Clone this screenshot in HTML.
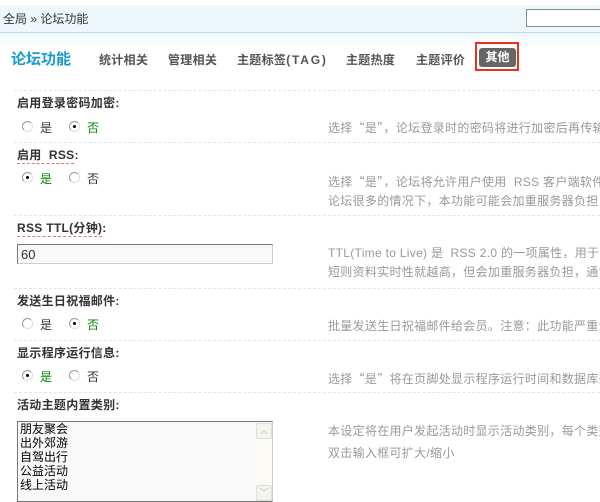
<!DOCTYPE html>
<html><head><meta charset="utf-8"><style>
body{margin:0;width:600px;height:502px;overflow:hidden;background:#fff;font-family:"Liberation Sans","Noto Sans CJK SC",sans-serif;font-size:12px;color:#333;position:relative}
.a{position:absolute;white-space:nowrap}
.q{font-family:"Noto Sans CJK SC",sans-serif}
.bar{position:absolute;left:0;top:5px;width:600px;height:27px;background:#eef7fb;border-bottom:1px solid #bcd9e6}
.fade{position:absolute;left:0;top:33px;width:600px;height:14px;background:linear-gradient(#eef7fb,#fff)}
.tab{font-weight:bold;color:#555;font-size:12px;top:51px;letter-spacing:0.3px}
.sep{position:absolute;left:14px;width:586px;border-top:1px dashed #d5e9f7;height:0}
.lbl{font-weight:bold;color:#333;font-size:12px;letter-spacing:0.3px}
.u{border-bottom:1px dashed #f07070;padding-bottom:1px}
.r{width:11px;height:11px;border-radius:50%;border:1px solid #999;border-right-color:#ddd;border-bottom-color:#ddd;background:#fff;position:absolute;box-sizing:border-box}
.r.on::after{content:"";position:absolute;left:3px;top:3px;width:3px;height:3px;background:#000;border-radius:50%}
.g{color:#080}
.d{color:#999;font-size:12px;line-height:19px;letter-spacing:0.3px}
</style></head><body>
<div class="bar"></div><div class="fade"></div>
<div class="a" style="left:3px;top:10px;color:#333">全局 » 论坛功能</div>
<div style="position:absolute;left:526px;top:9px;width:80px;height:16px;border:1px solid #888;border-right:none;background:#fff"></div>
<div class="a" style="left:11px;top:48px;font-size:15px;font-weight:bold;color:#1a9ad0">论坛功能</div>
<div class="a tab" style="left:99px">统计相关</div>
<div class="a tab" style="left:168px">管理相关</div>
<div class="a tab" style="left:237px">主题标签<span style="letter-spacing:1.8px">(TAG)</span></div>
<div class="a tab" style="left:346px">主题热度</div>
<div class="a tab" style="left:416px">主题评价</div>
<div style="position:absolute;left:475px;top:42px;width:44px;height:29px;border:2px solid #e8321c;box-sizing:border-box"></div>
<div class="a" style="left:479px;top:48px;width:37px;height:19px;background:#666;border-radius:3px;color:#fff;font-weight:bold;text-align:center;line-height:19px">其他</div>

<div class="sep" style="top:90px"></div>
<div class="a lbl" style="left:17px;top:94px">启用登录密码加密:</div>
<div class="r" style="left:22px;top:121px"></div><div class="a" style="left:40px;top:119px">是</div>
<div class="r on" style="left:69px;top:121px"></div><div class="a g" style="left:87px;top:119px">否</div>
<div class="a d" style="left:328px;top:118px">选择<span class="q">“</span>是<span class="q">”</span>，论坛登录时的密码将进行加密后再传输</div>

<div class="sep" style="top:142px"></div>
<div class="a lbl" style="left:17px;top:146px"><span class="u">启用&nbsp; RSS</span>:</div>
<div class="r on" style="left:22px;top:172px"></div><div class="a g" style="left:40px;top:170px">是</div>
<div class="r" style="left:69px;top:172px"></div><div class="a" style="left:87px;top:170px">否</div>
<div class="a d" style="left:328px;top:172px">选择<span class="q">“</span>是<span class="q">”</span>，论坛将允许用户使用&nbsp; RSS 客户端软件<br>论坛很多的情况下，本功能可能会加重服务器负担</div>

<div class="sep" style="top:215px"></div>
<div class="a lbl" style="left:17px;top:219px"><span class="u">RSS TTL(分钟)</span>:</div>
<div style="position:absolute;left:17px;top:244px;width:256px;height:20px;box-sizing:border-box;border:1px solid #777;border-right-color:#ccc;border-bottom-color:#ccc;background:#f8f8f8;padding:2px 3px;font-size:13px">60</div>
<div class="a d" style="left:328px;top:244px">TTL(Time to Live) 是&nbsp; RSS 2.0 的一项属性，用于<br>短则资料实时性就越高，但会加重服务器负担，通常</div>

<div class="sep" style="top:288px"></div>
<div class="a lbl" style="left:17px;top:292px">发送生日祝福邮件:</div>
<div class="r" style="left:22px;top:318px"></div><div class="a" style="left:40px;top:316px">是</div>
<div class="r on" style="left:69px;top:318px"></div><div class="a g" style="left:87px;top:316px">否</div>
<div class="a d" style="left:328px;top:317px">批量发送生日祝福邮件给会员。注意：此功能严重消</div>

<div class="sep" style="top:340px"></div>
<div class="a lbl" style="left:17px;top:344px">显示程序运行信息:</div>
<div class="r on" style="left:22px;top:370px"></div><div class="a g" style="left:40px;top:368px">是</div>
<div class="r" style="left:69px;top:370px"></div><div class="a" style="left:87px;top:368px">否</div>
<div class="a d" style="left:328px;top:369px">选择<span class="q">“</span>是<span class="q">”</span>将在页脚处显示程序运行时间和数据库查</div>

<div class="sep" style="top:392px"></div>
<div class="a lbl" style="left:17px;top:396px">活动主题内置类别:</div>
<div style="position:absolute;left:17px;top:421px;width:256px;height:81px;box-sizing:border-box;border:1px solid #777;border-right-color:#ccc;background:#f8f8f8;font-size:12px;line-height:14px;padding:0 2px;color:#000">朋友聚会<br>出外郊游<br>自驾出行<br>公益活动<br>线上活动</div>
<div style="position:absolute;left:256px;top:423px;width:15px;height:77px;background:#fcfcf4"></div>
<div style="position:absolute;left:256px;top:423px;width:14px;height:14px;border:1px solid #ddd;border-radius:2px;background:#f4f4ec;color:#bbb;font-size:8px;text-align:center;line-height:14px">︿</div>
<div style="position:absolute;left:256px;top:485px;width:14px;height:14px;border:1px solid #ddd;border-radius:2px;background:#f4f4ec;color:#bbb;font-size:8px;text-align:center;line-height:14px">﹀</div>
<div class="a d" style="left:328px;top:420px;line-height:22px">本设定将在用户发起活动时显示活动类别，每个类别<br>双击输入框可扩大/缩小</div>
</body></html>
